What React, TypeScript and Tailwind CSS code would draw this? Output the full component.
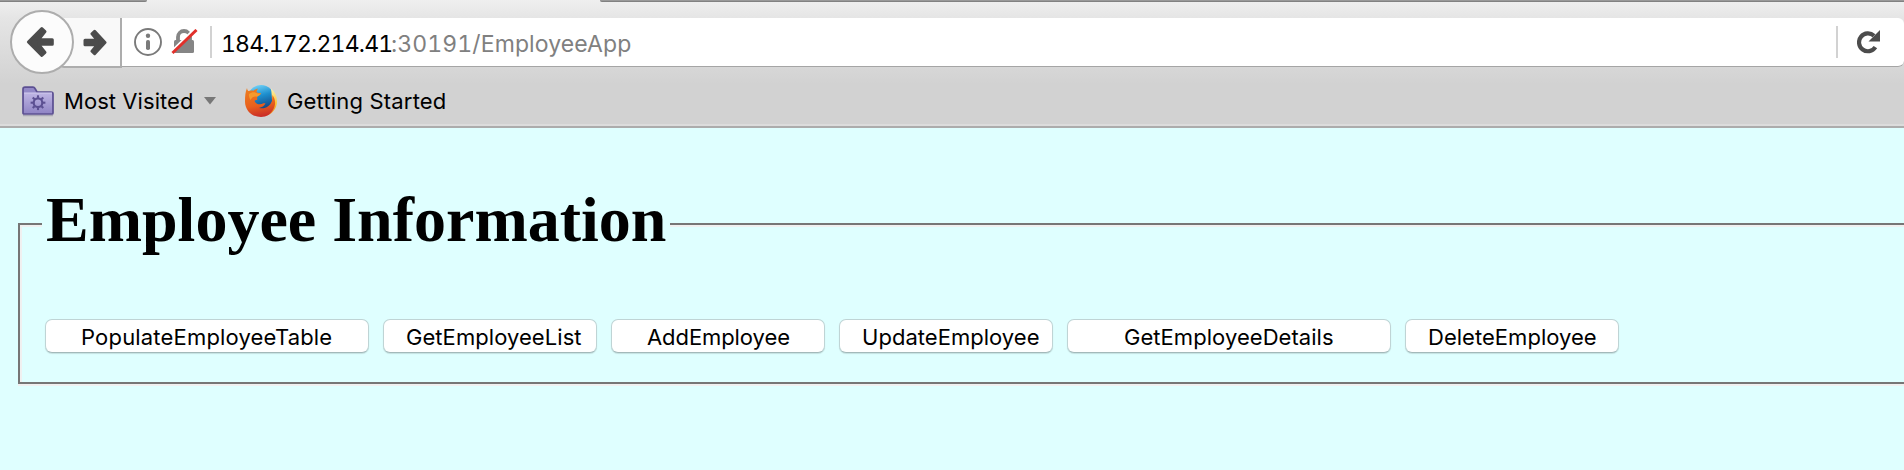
type ActionProps = { label: string; width: string; text: string };

const actions: ActionProps[] = [
  { label: 'PopulateEmployeeTable', width: 'w-[324px]', text: 'pl-[35px] tracking-[0.18px]' },
  { label: 'GetEmployeeList', width: 'w-[214px]', text: 'pl-[22px] tracking-[0.06px]' },
  { label: 'AddEmployee', width: 'w-[214px]', text: 'pl-[35px] tracking-[-0.08px]' },
  { label: 'UpdateEmployee', width: 'w-[214px]', text: 'pl-[22px] tracking-[0.03px]' },
  { label: 'GetEmployeeDetails', width: 'w-[324px]', text: 'pl-[56px] tracking-[0.05px]' },
  { label: 'DeleteEmployee', width: 'w-[214px]', text: 'pl-[22px] tracking-[0.03px]' },
];

function ActionButton({ label, width, text }: ActionProps) {
  return (
    <button
      type="button"
      className={`h-[34px] shrink-0 rounded-[7px] border border-[#bfd4d5] border-b-[#a3b9ba] bg-white text-left text-[22px] leading-[35px] whitespace-nowrap text-black shadow-[0_1px_1px_rgba(0,0,0,0.12)] ${width} ${text}`}
    >
      {label}
    </button>
  );
}

function BackArrow() {
  return (
    <svg width="30" height="32" viewBox="0 0 30 32" fill="#4c4c4c" stroke="#4c4c4c" strokeWidth="3" strokeLinejoin="round">
      <path d="M2.400 16 15.800 2.600 19 5.600 12.400 13.800H26.300V18.200H12.400L19 26.400 15.800 29.400Z" />
    </svg>
  );
}

function ForwardArrow() {
  return (
    <svg width="25" height="27" viewBox="0 0 25 27" fill="#4c4c4c" stroke="#4c4c4c" strokeWidth="3" strokeLinejoin="round">
      <path d="M23 13.500 12.600 2.300 10 4.800 15.400 11.300H3V15.700H15.400L10 22.200 12.600 24.700Z" />
    </svg>
  );
}

function InfoIcon() {
  return (
    <svg width="28" height="28" viewBox="0 0 28 28" fill="#7a7a7a">
      <circle cx="14" cy="14" r="13" fill="none" stroke="#7a7a7a" strokeWidth="1.9" />
      <circle cx="14" cy="7.8" r="2.2" />
      <rect x="12" y="12" width="4" height="10" rx="1.8" />
    </svg>
  );
}

function InsecureLock() {
  return (
    <svg width="27" height="26" viewBox="0 0 27 26" fill="none">
      <path d="M7 13V8a6 6 0 0 1 12 0v5" stroke="#858585" strokeWidth="3.8" />
      <rect x="3" y="11" width="20" height="13" rx="1.5" fill="#858585" />
      <path d="m.3 22.5 24-23.3" stroke="#fff" strokeWidth="2.2" />
      <path d="m1.5 24 24-23" stroke="#e1302b" strokeWidth="3" />
    </svg>
  );
}

function FolderIcon() {
  const teeth = [0, 45, 90, 135, 180, 225, 270, 315];
  return (
    <svg width="34" height="31" viewBox="0 0 34 31">
      <defs>
        <linearGradient id="folder" x1="0" y1="0" x2="0" y2="1">
          <stop offset="0" stopColor="#beb5e4" />
          <stop offset="1" stopColor="#9186c6" />
        </linearGradient>
      </defs>
      <path d="M2 29.5h30" stroke="#aaa9b5" strokeWidth="1.5" />
      <path d="M2 27V3.2Q2 1.2 4 1.2h8q1.3 0 2 1.3L16 6h14q2 0 2 2v19q0 1-1 1H3q-1 0-1-1Z" fill="#9389c7" stroke="#5c5092" strokeWidth="1.7" />
      <path d="M3 7h28v20H3Z" fill="url(#folder)" />
      <path d="M3 7h28" stroke="#d1caee" />
      <g stroke="#5c5092" fill="none">
        <circle cx="17" cy="16.7" r="4.300" strokeWidth="2.200" />
        {teeth.map((a) => (
          <path key={a} d="M17 11.800V9.300" strokeWidth="2.1" transform={`rotate(${a} 17 16.7)`} />
        ))}
      </g>
    </svg>
  );
}

function FirefoxIcon() {
  return (
    <svg width="34" height="34" viewBox="0 0 34 34">
      <defs>
        <linearGradient id="globe" x1=".35" y1="0" x2=".65" y2="1">
          <stop offset="0" stopColor="#6fd1f7" />
          <stop offset=".4" stopColor="#1d8fce" />
          <stop offset="1" stopColor="#12336f" />
        </linearGradient>
        <linearGradient id="fox" x1=".3" y1="0" x2=".5" y2="1">
          <stop offset="0" stopColor="#ed7d20" />
          <stop offset=".6" stopColor="#e8601c" />
          <stop offset="1" stopColor="#c92b27" />
        </linearGradient>
        <linearGradient id="tail" x1="0" y1="0" x2="0" y2="1">
          <stop offset="0" stopColor="#fff3ad" />
          <stop offset=".55" stopColor="#fbc332" />
          <stop offset="1" stopColor="#ee7b1c" />
        </linearGradient>
      </defs>
      <circle cx="17" cy="14.5" r="13.5" fill="url(#globe)" />
      <path d="M27 4.500c4 3.200 6 8 6 13 0 7-5 13-12 14.700L17 29c7-1.500 11-6 11-12 0-5-.6-9-1-12.500Z" fill="url(#tail)" />
      <path d="M3 4c0 1 .4 2 1.200 3C6 6.300 8 6.200 9.500 6.700c1-1.200 3-2 4.500-2-.9 1-1.500 2.300-1.300 3.500 1.400.8 3 .8 4.300 1-.3 1.500-2.500 2.700-4 3.600.4 1.200.2 2.400.2 3.200-1.200-.1-2.200.1-2.700.9 1.300 2.600 3.800 4 6.500 3.200 1.600-.5 2.800-1.300 4.500-.8-1 2.700-3.700 4.200-6.500 4.600 5.500 1.700 11-1.400 13-6.900l.5-6c3 4.500 3.500 9 1 14-2.500 5-7 8-12.500 8C8 33 1 26.500 1 17.500 1 12 1.300 8 3 4Z" fill="url(#fox)" />
      <path d="M5 10c3-2 5-2 7.500-1 1.500.7 3 .7 4.500.3-.5 1.500-2.500 2.700-4 3.500-2.500-.8-5 .2-6.500 3.200C5.500 14 4.500 12 5 10Z" fill="#f59a2c" />
    </svg>
  );
}

function ReloadIcon() {
  return (
    <svg width="24" height="26" viewBox="0 0 24 26">
      <path d="M18.400 18.200A8.900 8.900 0 1 1 17 6.800" fill="none" stroke="#4c4c4c" strokeWidth="4.200" />
      <path d="M23 1v11.500H11.500Z" fill="#4c4c4c" />
    </svg>
  );
}

function NavigationBar() {
  return (
    <div className="flex h-[49px] items-start">
      <div className="relative z-10 -mt-2 ml-2.5 flex size-16 shrink-0 items-center justify-center rounded-full border-2 border-[#adadad] bg-[#fcfcfc] pr-0.5">
        <BackArrow />
      </div>
      <div className="-ml-4 flex h-[50px] w-[64px] shrink-0 items-center justify-end rounded-bl-md border-r-2 border-b-2 border-[#adadad] bg-[#f9f9f9] pr-[13px]">
        <ForwardArrow />
      </div>
      <div className="flex h-[49px] flex-1 items-center rounded-r-[6px] border-b border-[#a5a5a5] bg-white">
        <div className="ml-3 h-7"><InfoIcon /></div>
        <div className="ml-[9px] h-[26px]"><InsecureLock /></div>
        <div className="ml-[12px] h-8 w-0.5 bg-[#d2d2d2]" />
        <p className="ml-[9px] flex pt-[3px] text-[23px] leading-7 whitespace-nowrap tabular-nums">
          <span className="w-[170px] tracking-[-0.8px] text-black">184.172.214.41</span>
          <span className="tracking-[0.1px] text-[#808080]">:30191/EmployeeApp</span>
        </p>
        <div className="ml-auto h-8 w-0.5 bg-[#d2d2d2]" />
        <div className="mr-[23px] ml-[19px] h-[26px]"><ReloadIcon /></div>
      </div>
    </div>
  );
}

function BookmarksBar() {
  return (
    <div className="flex h-[68px] items-start pt-[17px] text-[22px] leading-[34px] whitespace-nowrap text-black">
      <div className="ml-[21px] pt-0.5"><FolderIcon /></div>
      <span className="ml-[9px] w-[139px] tracking-[0.06px]">Most Visited</span>
      <svg className="mt-[13px]" width="14" height="8" viewBox="0 0 14 8"><path d="M1 0h12L7 7.500Z" fill="#777" /></svg>
      <div className="ml-[27px]"><FirefoxIcon /></div>
      <span className="ml-[9px] tracking-[0.18px]">Getting Started</span>
    </div>
  );
}

export default function App() {
  return (
    <div className="h-[470px] w-[1904px] overflow-hidden bg-[#dfffff] font-['Inter','Liberation_Sans',sans-serif]">
      <header className="h-32 border-b-2 border-[#acacac] bg-[linear-gradient(to_bottom,#efefef_0px,#e5e5e5_18px,#d2d2d2_84px,#d2d2d2_124px,#dcdcdc_124px)]">
        <div className="flex h-[18px] items-start justify-between">
          <div className="h-0.5 w-[147px] rounded-br-full border-b border-[#818181] bg-[#999]" />
          <div className="h-0.5 w-[1304px] rounded-bl-full border-b border-[#818181] bg-[#999]" />
        </div>
        <NavigationBar />
        <BookmarksBar />
      </header>
      <main className="pt-[55px] pl-[18px]">
        <fieldset className="h-[201px] w-[1900px] border-2 border-[#767676] px-[25px] shadow-[inset_2px_2px_0_#f0f0f0,0_2px_0_#f0f0f0]">
          <legend className="-ml-[3px] h-[82px] bg-[#dfffff] px-1 font-['Liberation_Serif',serif] text-[64px] leading-[74px] font-bold whitespace-nowrap text-black">
            Employee Information
          </legend>
          <div className="mt-[54px] flex gap-[14px]">
            {actions.map((action) => (
              <ActionButton key={action.label} {...action} />
            ))}
          </div>
        </fieldset>
      </main>
    </div>
  );
}
